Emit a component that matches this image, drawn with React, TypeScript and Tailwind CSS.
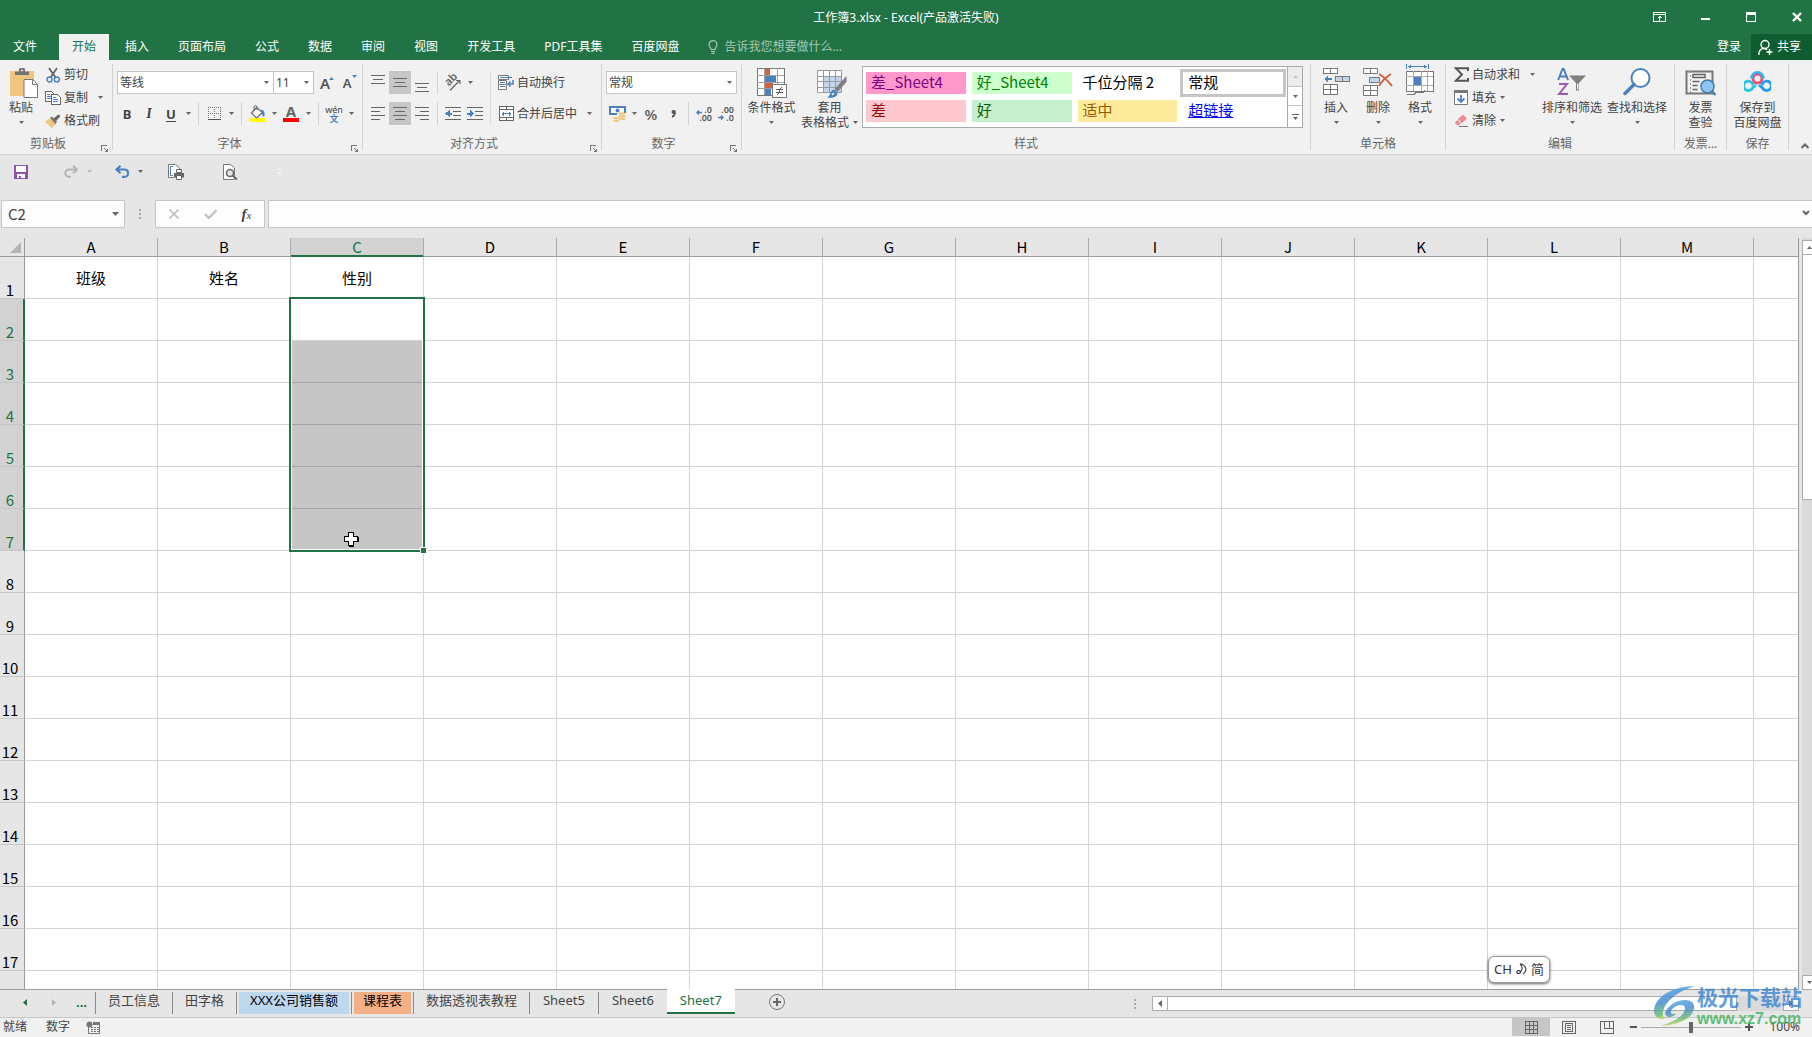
import React from 'react';
import clsx from 'clsx';

const COLUMNS = ['A', 'B', 'C', 'D', 'E', 'F', 'G', 'H', 'I', 'J', 'K', 'L', 'M'];
const ROWS = Array.from({ length: 17 }, (_, i) => i + 1);
const CELLS: Record<string, string> = { A1: '班级', B1: '姓名', C1: '性别' };
const SELECTION = { column: 'C', first: 2, last: 7 };

const MENU_TABS = ['文件', '开始', '插入', '页面布局', '公式', '数据', '审阅', '视图', '开发工具', 'PDF工具集', '百度网盘'];

const CELL_STYLES = [
  { name: '差_Sheet4', look: 'bg-[#ff99cc] text-[#800080]' },
  { name: '好_Sheet4', look: 'bg-[#ccffcc] text-[#008000]' },
  { name: '千位分隔 2', look: 'text-black' },
  { name: '常规', look: 'text-black outline-3 outline-[#c6c6c6]' },
  { name: '差', look: 'bg-[#ffc7ce] text-[#9c0006]' },
  { name: '好', look: 'bg-[#c6efce] text-[#006100]' },
  { name: '适中', look: 'bg-[#ffeb9c] text-[#9c5700]' },
  { name: '超链接', look: 'text-[#0000ff] underline' },
];

const SHEETS = [
  { name: '员工信息', look: 'px-3' },
  { name: '田字格', look: 'px-3' },
  { name: 'XXX公司销售额', look: 'mx-0.5 bg-[#bdd7ee] px-[11px] text-black' },
  { name: '课程表', look: 'mx-0.5 bg-[#f4b084] px-[9px] text-black' },
  { name: '数据透视表教程', look: 'px-3' },
  { name: 'Sheet5', look: 'px-[13px]' },
  { name: 'Sheet6', look: 'px-[13px]' },
  { name: 'Sheet7', look: 'px-[13px]', active: true },
];

/* ---------- small shared pieces ---------- */

function Svg({
  w,
  h,
  crisp,
  className,
  children,
}: {
  w: number;
  h: number;
  crisp?: boolean;
  className?: string;
  children: React.ReactNode;
}) {
  return (
    <svg
      width={w}
      height={h}
      viewBox={`0 0 ${w} ${h}`}
      fill="none"
      shapeRendering={crisp ? 'crispEdges' : 'auto'}
      className={clsx('shrink-0', className)}
      aria-hidden
    >
      {children}
    </svg>
  );
}

function Caret({ className }: { className?: string }) {
  return (
    <Svg w={5} h={3} className={className}>
      <path d="M0 0h5L2.5 3z" fill="currentColor" />
    </Svg>
  );
}

function IconButton({ label, pressed, children }: { label: string; pressed?: boolean; children: React.ReactNode }) {
  return (
    <button
      type="button"
      aria-label={label}
      title={label}
      className={clsx('flex h-[23px] w-[22px] shrink-0 items-center justify-center', pressed && 'bg-[#c6c6c6]')}
    >
      {children}
    </button>
  );
}

function CaretButton({ label }: { label: string }) {
  return (
    <button type="button" aria-label={label} className="flex h-[23px] w-3 shrink-0 items-center justify-center text-[#666]">
      <Caret />
    </button>
  );
}

function Divider() {
  return <span className="mx-1 h-[23px] w-px shrink-0 bg-[#d2d2d2]" />;
}

function Group({
  title,
  launcher,
  className,
  children,
}: {
  title: string;
  launcher?: boolean;
  className: string;
  children: React.ReactNode;
}) {
  return (
    <>
      <section aria-label={title} className={clsx('flex flex-col', className)}>
        <div className="flex h-[75px] items-start">{children}</div>
        <div className="flex h-[18px] items-center text-[#666]">
          <span className="flex-1 text-center">{title}</span>
          {launcher && (
            <button type="button" aria-label={`${title}设置`} className="flex h-4 w-4 items-end justify-center">
              <Svg w={7} h={7} crisp>
                <path d="M.5 6V.5H6" stroke="#777" />
                <path d="M3 3l3 3" stroke="#777" />
                <path d="M7 3v4H3z" fill="#777" />
              </Svg>
            </button>
          )}
        </div>
      </section>
      <span className="my-1 w-px shrink-0 bg-[#d2d2d2]" />
    </>
  );
}

function BigButton({
  icon,
  lines,
  caret,
  inlineCaret,
  className,
}: {
  icon: React.ReactNode;
  lines: string[];
  caret?: boolean;
  inlineCaret?: boolean;
  className: string;
}) {
  return (
    <button type="button" className={clsx('flex shrink-0 flex-col items-center pt-2', className)}>
      <span className="mb-0.5 flex h-[30px] items-start justify-center">{icon}</span>
      {lines.map((line, i) => (
        <span key={line} className="flex items-center gap-1 whitespace-nowrap leading-[15px]">
          {line}
          {inlineCaret && i === lines.length - 1 && <Caret className="text-[#666]" />}
        </span>
      ))}
      {caret && (
        <span className="flex h-[15px] items-center">
          <Caret className="text-[#666]" />
        </span>
      )}
    </button>
  );
}

function SmallButton({ icon, label, caret }: { icon: React.ReactNode; label: string; caret?: string }) {
  return (
    <button type="button" className="flex h-[23px] items-center whitespace-nowrap">
      <span className="mr-[3px] flex w-4 justify-center">{icon}</span>
      {label}
      {caret && <Caret className={clsx('text-[#666]', caret)} />}
    </button>
  );
}

function Combo({ label, value, className }: { label: string; value: string; className: string }) {
  return (
    <span className={clsx('relative block h-[23px] shrink-0', className)}>
      <select
        aria-label={label}
        defaultValue={value}
        className="h-full w-full appearance-none border border-[#c6c6c6] bg-white pl-0.5 text-[12px] text-[#444] outline-none"
      >
        <option>{value}</option>
      </select>
      <Caret className="pointer-events-none absolute right-[5px] top-2.5 text-[#666]" />
    </span>
  );
}

/* three or four text lines, given as [start, end] pairs */
function Lines({ rows, top }: { rows: [number, number][]; top: number }) {
  return (
    <Svg w={14} h={20} crisp>
      {rows.map(([a, b], i) => (
        <path key={i} d={`M${a} ${top + i * 4 + 0.5}H${b}`} stroke="#666" />
      ))}
    </Svg>
  );
}

/* ---------- title bar and menu ---------- */

function TitleBar() {
  return (
    <header className="bg-[#217346] text-white">
      <div className="relative flex h-[34px] items-center justify-end">
        <h1 className="absolute inset-x-0 top-0 text-center leading-9">
          <span className="inline-block">工作簿3.xlsx - Excel(产品激活失败)</span>
        </h1>
        <div className="relative flex">
          <button type="button" aria-label="功能区显示选项" className="flex h-8 w-[46px] items-center justify-center">
            <Svg w={13} h={10} crisp>
              <path d="M.5.5h12v9H.5z" stroke="#fff" />
              <path d="M0 2.500h13M6.500 4v5M4.500 5.500h4M5.500 4.500h2" stroke="#fff" />
            </Svg>
          </button>
          <button type="button" aria-label="最小化" className="flex h-8 w-[46px] items-center justify-center pt-1">
            <span className="h-0.5 w-[9px] bg-white" />
          </button>
          <button type="button" aria-label="最大化" className="flex h-8 w-[46px] items-center justify-center">
            <span className="h-[10px] w-[10px] border border-t-3 border-white" />
          </button>
          <button type="button" aria-label="关闭" className="flex h-8 w-[38px] items-center justify-center pl-2">
            <Svg w={10} h={10}>
              <path d="M1 1l8 8M9 1L1 9" stroke="#fff" strokeWidth="2.400" />
            </Svg>
          </button>
        </div>
      </div>
      <nav className="flex h-[26px] items-stretch">
        {MENU_TABS.map((tab, i) => (
          <button
            key={tab}
            type="button"
            className={clsx(
              'shrink-0 px-[13px]',
              i === 0 ? 'mr-[9px]' : 'mr-[3px]',
              tab === '开始' ? 'bg-[#f1f1f1] text-[#217346]' : 'text-white',
            )}
          >
            {tab}
          </button>
        ))}
        <label className="ml-[13px] flex flex-1 items-center gap-1.5">
          <Svg w={10} h={14}>
            <path
              d="M3 9.500C3 7.500 1 7 1 4.600a4 4 0 018 0C9 7 7 7.500 7 9.500zM3 11.500h4M3.500 13.300h3"
              stroke="#a6c7b5"
              strokeWidth="1.200"
            />
          </Svg>
          <input
            type="text"
            placeholder="告诉我您想要做什么..."
            className="w-60 bg-transparent outline-none placeholder:text-[#a6c7b5]"
          />
        </label>
        <button type="button" className="px-2.5">登录</button>
        <button type="button" className="flex items-center gap-1 bg-[#0e5c2f] pl-[7px] pr-[11px]">
          <Svg w={15} h={17}>
            <circle cx="7" cy="5.500" r="4" stroke="#fff" strokeWidth="1.400" />
            <path d="M.8 16c0-4 2-6.500 5-6.500 1.500 0 2.500.5 3.200 1.200M11.500 10v6M8.500 13h6" stroke="#fff" strokeWidth="1.400" />
          </Svg>
          共享
        </button>
      </nav>
    </header>
  );
}

/* ---------- ribbon ---------- */

function ClipboardGroup() {
  return (
    <Group title="剪贴板" launcher className="w-[112px] shrink-0">
      <BigButton
        className="mx-0.5 w-[38px]"
        lines={['粘贴']}
        caret
        icon={
          <Svg w={29} h={30} className="ml-1">
            <path d="M1 3h24v25H1z" fill="#eec67f" />
            <path d="M6 7V3.500h4V1.500a3 2 0 016 0v2h4V7z" fill="#737373" />
            <circle cx="13" cy="2.500" r="1" fill="#f1f1f1" />
            <path d="M15 11.500h9l4.500 5V29.500H15z" fill="#fff" stroke="#777" />
            <path d="M23.500 11.500v5h5" stroke="#777" />
          </Svg>
        }
      />
      <div className="flex flex-col pl-[3px] pt-[3px]">
        <SmallButton
          label="剪切"
          icon={
            <Svg w={14} h={16}>
              <path d="M3 1l6.500 9.500M11 1L4.500 10.500" stroke="#666" strokeWidth="1.800" />
              <circle cx="3.500" cy="12.500" r="2.500" stroke="#4a80bd" strokeWidth="1.400" />
              <circle cx="10.800" cy="12.500" r="2.500" stroke="#4a80bd" strokeWidth="1.400" />
            </Svg>
          }
        />
        <SmallButton
          label="复制"
          caret="ml-2.5"
          icon={
            <Svg w={16} h={14} crisp>
              <path d="M.5.5h6l2 2v8h-8z" fill="#fff" stroke="#666" />
              <path d="M2 3.500h3M2 5.500h4M2 7.500h4" stroke="#4a80bd" />
              <path d="M6.500 3.500h6l2.500 2.500v7.500H6.500z" fill="#fff" stroke="#666" />
              <path d="M8 6.500h3M8 8.500h5M8 10.500h5" stroke="#4a80bd" />
            </Svg>
          }
        />
        <SmallButton
          label="格式刷"
          icon={
            <Svg w={16} h={14}>
              <path d="M0 8l5-4 6 6-4 4-2-1-1-2-2-1z" fill="#eec67f" />
              <path d="M5 4l2-1.500 5 5L10.500 10z" fill="#777" />
              <path d="M8.500 4.500L13 .8a1.500 1.500 0 012 2L11 7z" fill="#666" />
            </Svg>
          }
        />
      </div>
    </Group>
  );
}

function FontGroup() {
  return (
    <Group title="字体" launcher className="w-[249px] shrink-0">
      <div className="flex flex-col gap-2 pl-[3px] pt-[11px]">
        <div className="flex items-center pl-px">
          <Combo label="字体" value="等线" className="w-[157px]" />
          <Combo label="字号" value="11" className="-ml-px w-[41px]" />
          <IconButton label="增大字号">
            <span className="relative text-[15px] font-semibold text-[#555]">
              A
              <Caret className="absolute -right-1 top-0.5 rotate-180 text-[#4a80bd]" />
            </span>
          </IconButton>
          <IconButton label="减小字号">
            <span className="relative text-[13px] font-semibold text-[#555]">
              A
              <Caret className="absolute -right-1.5 top-0 text-[#4a80bd]" />
            </span>
          </IconButton>
        </div>
        <div className="flex items-center">
          <IconButton label="加粗"><b className="text-[13px] text-[#444]">B</b></IconButton>
          <IconButton label="倾斜"><i className="font-serif text-[14px] font-bold text-[#444]">I</i></IconButton>
          <IconButton label="下划线"><span className="text-[13px] font-bold text-[#444] underline underline-offset-2">U</span></IconButton>
          <CaretButton label="下划线样式" />
          <Divider />
          <IconButton label="边框">
            <Svg w={13} h={13} crisp>
              <path d="M.5 0v12M6.500 0v12M12.500 0v12M0 .5h13M0 6.500h13" stroke="#777" strokeDasharray="1 1" />
              <path d="M0 12.500h13" stroke="#555" />
            </Svg>
          </IconButton>
          <CaretButton label="边框样式" />
          <Divider />
          <IconButton label="填充颜色">
            <Svg w={16} h={17}>
              <path d="M7.500 2.500l6 5-6 5.500-5-5z" fill="#fff" stroke="#666" strokeWidth="1.200" />
              <path d="M5 6V1.500C5 .5 8 .5 8 1.500V5" stroke="#666" />
              <path d="M12 4.500c3 .5 4 3 3.500 6-.5 1.500-2 1-2 0z" fill="#4a80bd" />
              <path d="M0 13h16v4H0z" fill="#ff0" />
            </Svg>
          </IconButton>
          <CaretButton label="填充颜色列表" />
          <IconButton label="字体颜色">
            <span className="flex w-4 flex-col items-center text-[15px] font-bold leading-[13px] text-[#666]">
              A
              <span className="h-1 w-4 bg-[#f00]" />
            </span>
          </IconButton>
          <CaretButton label="字体颜色列表" />
          <Divider />
          <IconButton label="拼音">
            <span className="flex flex-col items-center text-[9px] leading-[9px] text-[#444]">
              wén
              <span className="font-bold text-[#4a80bd]">文</span>
            </span>
          </IconButton>
          <CaretButton label="拼音选项" />
        </div>
      </div>
    </Group>
  );
}

function Indent({ flip }: { flip?: boolean }) {
  return (
    <Svg w={16} h={13} crisp>
      <path d="M0 .5h16M8 4.500h8M8 8.500h8M0 12.500h16" stroke="#666" />
      <path d={flip ? 'M0 6.500h5' : 'M2 6.500h5'} stroke="#4a80bd" strokeWidth="2" />
      <path d={flip ? 'M3 3l4.500 3.500L3 10z' : 'M4.500 3L0 6.500 4.500 10z'} fill="#4a80bd" />
    </Svg>
  );
}

function AlignGroup() {
  return (
    <Group title="对齐方式" launcher className="w-[238px] shrink-0">
      <div className="flex pl-1 pt-[11px]">
        <div className="flex w-[120px] flex-col gap-2">
          <div className="flex">
            <IconButton label="顶端对齐"><Lines top={2} rows={[[0, 14], [2, 12], [0, 14]]} /></IconButton>
            <IconButton label="垂直居中" pressed><Lines top={5} rows={[[0, 14], [2, 12], [0, 14]]} /></IconButton>
            <IconButton label="底端对齐"><Lines top={10} rows={[[0, 14], [2, 12], [0, 14]]} /></IconButton>
            <Divider />
            <IconButton label="方向">
              <span className="relative h-4 w-4">
                <span className="absolute -left-px -top-0.5 -rotate-45 text-[11px] font-semibold leading-3 text-[#666]">ab</span>
                <Svg w={16} h={16} className="absolute inset-0">
                  <path d="M5 15.500L14.500 5.500M11 5.500h4V9" stroke="#666" strokeWidth="1.200" />
                </Svg>
              </span>
            </IconButton>
            <CaretButton label="方向选项" />
          </div>
          <div className="flex">
            <IconButton label="左对齐"><Lines top={3} rows={[[0, 14], [0, 9], [0, 14], [0, 9]]} /></IconButton>
            <IconButton label="居中" pressed><Lines top={3} rows={[[0, 14], [2, 12], [0, 14], [2, 12]]} /></IconButton>
            <IconButton label="右对齐"><Lines top={3} rows={[[0, 14], [5, 14], [0, 14], [5, 14]]} /></IconButton>
            <Divider />
            <IconButton label="减少缩进量"><Indent /></IconButton>
            <IconButton label="增加缩进量"><Indent flip /></IconButton>
          </div>
        </div>
        <span className="mx-[3px] w-px bg-[#dcdcdc]" />
        <div className="flex flex-col gap-2 pl-1">
          <SmallButton
            label="自动换行"
            icon={
              <Svg w={16} h={16}>
                <path d="M.5.5h10v4H.5zM.5 5.500h8v4h-8zM.5 9.500h8v5h-8z" fill="#fff" stroke="#777" />
                <path d="M2 2.500h12M2 7.500h5M2 11.500h5" stroke="#4a80bd" />
                <path d="M15 5v4h-4M12.500 6.500L10 9l2.500 2.500" stroke="#4a80bd" strokeWidth="1.500" />
              </Svg>
            }
          />
          <SmallButton
            label="合并后居中"
            caret="ml-2.5"
            icon={
              <Svg w={15} h={15} crisp>
                <path d="M.5.5h14v14H.5zM.5 3.500h14M.5 11.500h14M7.500 0v3M7.500 12v3" fill="#fff" stroke="#666" />
                <path d="M3 7.500h9M4.500 5.500v4M3.500 6.500v2M10.500 5.500v4M11.500 6.500v2" stroke="#4a80bd" />
              </Svg>
            }
          />
        </div>
      </div>
    </Group>
  );
}

function DecimalIcon({ more }: { more?: boolean }) {
  return (
    <span className="relative flex h-4 w-4 flex-col text-right text-[9px] font-semibold leading-2 text-[#555]">
      <span>{more ? '.0' : '.00'}</span>
      <span>{more ? '.00' : '.0'}</span>
      <Svg w={6} h={5} className={clsx('absolute', more ? 'left-0 top-1' : 'bottom-0.5 left-0')}>
        <path d={more ? 'M6 2.500H1.500M3 .5l-2 2 2 2' : 'M0 2.500h4.500M3 .5l2 2-2 2'} stroke="#4a80bd" strokeWidth="1.500" />
      </Svg>
    </span>
  );
}

function NumberGroup() {
  return (
    <Group title="数字" launcher className="w-[139px] shrink-0">
      <div className="flex flex-col gap-2 pl-1 pt-[11px]">
        <Combo label="数字格式" value="常规" className="w-[131px]" />
        <div className="flex items-center">
          <IconButton label="会计数字格式">
            <Svg w={17} h={16}>
              <path d="M1 1h15v7H1z" fill="#fff" stroke="#4a80bd" strokeWidth="2" />
              <circle cx="8.500" cy="4.500" r="2" fill="#4a80bd" />
              <path d="M8 7h9v7H8z" fill="#f1f1f1" />
              <ellipse cx="13" cy="7.500" rx="3.500" ry="1.200" fill="#eec67f" />
              <ellipse cx="13" cy="10.200" rx="3.500" ry="1.200" fill="#eec67f" />
              <ellipse cx="13" cy="12.900" rx="3.500" ry="1.200" fill="#eec67f" />
              <ellipse cx="7" cy="12.200" rx="3.200" ry="1.100" fill="#eec67f" />
              <ellipse cx="7.500" cy="14.800" rx="3.200" ry="1.100" fill="#eec67f" />
            </Svg>
          </IconButton>
          <CaretButton label="会计格式列表" />
          <IconButton label="百分比样式"><span className="text-[15px] font-medium text-[#555]">%</span></IconButton>
          <IconButton label="千位分隔样式">
            <Svg w={5} h={8}>
              <path d="M1 5.500C3 5 3 4 2.500 4A2 2 0 112.500 0 2.200 2.200 0 014.800 2.500C4.800 5 3.500 7.500 1 7.500z" fill="#555" />
            </Svg>
          </IconButton>
          <Divider />
          <IconButton label="增加小数位数"><DecimalIcon more /></IconButton>
          <IconButton label="减少小数位数"><DecimalIcon /></IconButton>
        </div>
      </div>
    </Group>
  );
}

function StylesGroup() {
  return (
    <Group title="样式" className="w-[568px] min-w-0">
      <BigButton
        className="ml-px w-[57px]"
        lines={['条件格式']}
        caret
        icon={
          <Svg w={30} h={30} crisp>
            <path d="M.5.5h27v27H.5z" fill="#fff" stroke="#777" />
            <path d="M8 1h5v6H8z" fill="#d6603d" />
            <path d="M8 8h11v6H8z" fill="#4a80bd" />
            <path d="M8 14h8v6H8z" fill="#d6603d" />
            <path d="M8 21h6v6H8z" fill="#4a80bd" />
            <path d="M7.500 0v27M20.500 0v27M0 7.500h27M0 14.500h27M0 20.500h27" stroke="#a0a0a0" />
            <path d="M15.500 16.500h14v13h-14z" fill="#fff" stroke="#777" />
            <path d="M19 21.500h7M19 24.500h7M24.500 19l-4 8" stroke="#555" />
          </Svg>
        }
      />
      <BigButton
        className="w-[59px]"
        lines={['套用', '表格格式']}
        inlineCaret
        icon={
          <Svg w={30} h={30} className="ml-1">
            <path d="M.5 2.500h24v22H.5z" fill="#fff" />
            <path d="M6.500 8.500h18v16h-18z" fill="#c3d5eb" />
            <path d="M.5 2.500h24v22H.5zM6.500 2v22M12.500 2v22M18.500 2v22M0 8.500h24M0 13.500h24M0 19.500h24" stroke="#999" />
            <path d="M29.500 8v6L20.500 24l-3-3z" fill="#808080" />
            <path d="M17 21.500l3.500 3.500c0 3.500-4 5.500-10.500 4.500 3-.5 3-7 7-8z" fill="#4a80bd" />
            <path d="M15 27l2-2" stroke="#fff" strokeWidth="1.500" />
          </Svg>
        }
      />
      <div className="ml-[3px] mr-[7px] mt-1.5 flex h-[62px] flex-1 border border-[#ababab] bg-white">
        <div className="grid flex-1 grid-cols-4 gap-x-1.5 gap-y-1.5 px-[3px] py-[5px] font-['Noto_Sans_CJK_SC',sans-serif] text-[15px]">
          {CELL_STYLES.map((s) => (
            <button
              key={s.name}
              type="button"
              className={clsx('h-[22px] whitespace-nowrap pb-0.5 pl-[5px] text-left leading-5', s.look)}
            >
              {s.name}
            </button>
          ))}
        </div>
        <div className="ml-px flex w-[15px] flex-col border-l border-[#ababab] text-[#666]">
          <button type="button" aria-label="上一行" className="flex h-5 items-center justify-center border-b border-[#c6c6c6] bg-[#ececec]">
            <Caret className="rotate-180 text-[#c6c6c6]" />
          </button>
          <button type="button" aria-label="下一行" className="flex h-[19px] items-center justify-center border-b border-[#c6c6c6]">
            <Caret />
          </button>
          <button type="button" aria-label="其他样式" className="flex flex-1 flex-col items-center justify-center gap-0.5">
            <span className="h-px w-[7px] bg-[#666]" />
            <Caret />
          </button>
        </div>
      </div>
    </Group>
  );
}

function CellsGroup() {
  return (
    <Group title="单元格" className="w-[134px] shrink-0">
      <BigButton
        className="ml-1 w-[42px]"
        lines={['插入']}
        caret
        icon={
          <Svg w={27} h={28} crisp>
            <path d="M.5.5h14v5H.5zM7.500 0v5M.5 16.500h14v10H.5zM7.500 16v11M0 21.500h14" fill="#fff" stroke="#777" />
            <path d="M12.500 8.500h14v5h-14zM19.500 8v5" fill="#c3d5eb" stroke="#777" />
            <path d="M3 11h6" stroke="#4a80bd" strokeWidth="2" />
            <path d="M5 7.500v7L1 11z" fill="#4a80bd" />
          </Svg>
        }
      />
      <BigButton
        className="w-[42px]"
        lines={['删除']}
        caret
        icon={
          <Svg w={30} h={28}>
            <path d="M.5.500h14v5H.5zM7.500 0v5M.5 17.500h14v10H.5zM7.500 17v11M0 22.500h14" fill="#fff" stroke="#777" />
            <path d="M6.500 9.500h10v5h-10z" fill="#c3d5eb" stroke="#777" />
            <path d="M16 6c5 3 9 7 13 12M28 6c-5 3-9 7-12 12" stroke="#d6603d" strokeWidth="2" />
          </Svg>
        }
      />
      <BigButton
        className="w-[42px]"
        lines={['格式']}
        caret
        icon={
          <Svg w={28} h={31} crisp className="-mt-1">
            <path d="M.5 0v5M22.500 0v5M2 2.500h19M4.500 1v3M3.500 1.500v2M18.500 1v3M19.500 1.500v2" stroke="#4a80bd" />
            <path d="M.5 7.500h27v20H.5z" fill="#fff" stroke="#777" />
            <path d="M7.500 7v20M15.500 7v20M21.500 7v20M0 12.500h27M0 21.500h27" stroke="#aaa" />
            <path d="M8 13h7v8H8z" fill="#4a80bd" />
            <path d="M1 30.500h7l2-2h7l2-2" stroke="#777" />
          </Svg>
        }
      />
    </Group>
  );
}

function EditGroup() {
  return (
    <Group title="编辑" className="w-[228px] shrink-0">
      <div className="flex w-[93px] shrink-0 flex-col pl-[7px] pt-[3px]">
        <SmallButton
          label="自动求和"
          caret="ml-2.5"
          icon={
            <Svg w={15} h={15}>
              <path d="M14 4V1.200H1.800L8 7.500l-6.200 6.300H14V11" stroke="#555" strokeWidth="2" />
            </Svg>
          }
        />
        <SmallButton
          label="填充"
          caret="ml-1"
          icon={
            <Svg w={14} h={15}>
              <path d="M.5.5h13v14H.5z" fill="#fff" stroke="#777" />
              <path d="M0 1.500h14" stroke="#777" strokeWidth="3" />
              <path d="M7 5v7M3.500 8.500L7 12l3.500-3.500" stroke="#4a80bd" strokeWidth="1.800" />
            </Svg>
          }
        />
        <SmallButton
          label="清除"
          caret="ml-1"
          icon={
            <Svg w={14} h={14}>
              <path d="M4 5l5-4.500 4 4L7.500 9.500z" fill="#e98c98" />
              <path d="M3.500 5.500l3.500 4-2 2H3L.5 9z" fill="#e98c98" stroke="#f1f1f1" strokeWidth=".6" />
              <path d="M5 12.500h9" stroke="#777" />
            </Svg>
          }
        />
      </div>
      <BigButton
        className="w-[66px]"
        lines={['排序和筛选']}
        caret
        icon={
          <Svg w={30} h={28}>
            <path d="M1.200 12L5.500 1h1.200L11 12M2.800 8.500h6.600" stroke="#4a80bd" strokeWidth="2" />
            <path d="M2 16h8L2 26h9" stroke="#9b59b6" strokeWidth="2" />
            <path d="M12 7.500h17l-7 7.500v7.500h-3V15z" fill="#808080" />
            <path d="M20 15.500h1.500v6H20z" fill="#f1f1f1" />
          </Svg>
        }
      />
      <BigButton
        className="w-[64px]"
        lines={['查找和选择']}
        caret
        icon={
          <Svg w={28} h={28}>
            <circle cx="17.500" cy="10" r="9" fill="#fff" stroke="#4a80bd" strokeWidth="2" />
            <path d="M11 16.500L2 25.500" stroke="#4a80bd" strokeWidth="3.500" strokeLinecap="round" />
          </Svg>
        }
      />
    </Group>
  );
}

function Ribbon() {
  return (
    <div className="flex h-[95px] shrink-0 overflow-hidden border-b border-[#d2d2d2] bg-[#f1f1f1] text-[#444]">
      <ClipboardGroup />
      <FontGroup />
      <AlignGroup />
      <NumberGroup />
      <StylesGroup />
      <CellsGroup />
      <EditGroup />
      <Group title="发票..." className="w-[51px] shrink-0">
        <BigButton
          className="w-full"
          lines={['发票', '查验']}
          icon={
            <Svg w={31} h={28}>
              <path d="M1.500 3.500h26v22h-26z" stroke="#777" strokeWidth="2" />
              <path d="M5.500 3v23M4 3v3M4 24v3" stroke="#999" strokeDasharray="2 2" />
              <path d="M8 6.500h12v3H8z" stroke="#666" strokeWidth="1.500" />
              <path d="M7.500 13.500h7M7.500 17.500h5M7.500 21.500h5" stroke="#666" strokeWidth="1.500" />
              <circle cx="22.500" cy="18.500" r="6.500" fill="#90c4f4" stroke="#3f7fa8" strokeWidth="1.500" />
              <path d="M27 23l3.500 4" stroke="#3f7fa8" strokeWidth="2" />
            </Svg>
          }
        />
      </Group>
      <Group title="保存" className="w-[61px] shrink-0">
        <BigButton
          className="w-full"
          lines={['保存到', '百度网盘']}
          icon={
            <Svg w={27} h={26}>
              <path d="M11 13.500l-2.500 2.200a4.700 4.700 0 100 4.300l3.500-3" stroke="#25c3ee" strokeWidth="2.800" />
              <path d="M16 13.500l2.500 2.200a4.700 4.700 0 110 4.300l-3.500-3" stroke="#1f9bf5" strokeWidth="2.800" />
              <circle cx="13.500" cy="10.500" r="4.500" stroke="#f0506e" strokeWidth="2.800" />
              <path d="M7.500 10.500a6 6.200 0 0112 0" stroke="#2bb8f5" strokeWidth="2.600" />
            </Svg>
          }
        />
      </Group>
      <button type="button" aria-label="折叠功能区" className="ml-auto flex w-[11px] shrink-0 items-end pb-[5px]">
        <Svg w={8} h={6}>
          <path d="M.5 5L4 1.500 7.500 5" stroke="#666" strokeWidth="2" />
        </Svg>
      </button>
    </div>
  );
}

/* ---------- quick access and formula bar ---------- */

function QuickAccess() {
  return (
    <div className="flex h-[35px] shrink-0 items-center pb-0.5 pl-3.5">
      <button type="button" aria-label="保存">
        <Svg w={14} h={14} crisp>
          <path d="M0 0h14v14H0z" fill="#8a57ad" />
          <path d="M2 1h10v6H2zM3 9h8v4H3z" fill="#fff" />
          <path d="M5 11h2v2H5z" fill="#8a57ad" />
        </Svg>
      </button>
      <button type="button" aria-label="恢复" className="ml-9 flex items-center gap-[9px] text-[#bdbdbd]">
        <Svg w={14} h={13}>
          <path d="M13 4.500H5A3.500 3.500 0 005 11.800h2M9 .8l4 3.700-4 3.700" stroke="#b5b5b5" strokeWidth="2" />
        </Svg>
        <Caret />
      </button>
      <button type="button" aria-label="撤消" className="ml-[23px] flex items-center gap-[9px] text-[#666]">
        <Svg w={14} h={13}>
          <path d="M1.500 4.500h8a3.600 3.600 0 010 7.300H7M5.500.8l-4 3.700 4 3.700" stroke="#4a80bd" strokeWidth="2.200" />
        </Svg>
        <Caret />
      </button>
      <button type="button" aria-label="快速打印" className="ml-[25px]">
        <Svg w={17} h={16}>
          <path d="M6 13.500H.5V.5h7l4 3.500v2" fill="#fff" stroke="#777" />
          <path d="M5 2.500H2.500v9H5" stroke="#4a80bd" />
          <path d="M6 9h10v4.500H6z" fill="#666" />
          <path d="M8.500 5.500h5v3h-5zM8.500 11.500h5v4h-5z" fill="#fff" stroke="#666" />
        </Svg>
      </button>
      <button type="button" aria-label="打印预览" className="ml-[38px]">
        <Svg w={15} h={16}>
          <path d="M.5.5h7l4 3.500v11.500H.5z" fill="#fff" stroke="#777" />
          <circle cx="7" cy="9" r="3.500" fill="#e6e6e6" stroke="#666" strokeWidth="1.500" />
          <path d="M9.500 11.500l4.500 4" stroke="#666" strokeWidth="2" />
        </Svg>
      </button>
      <button type="button" aria-label="自定义快速访问工具栏" className="ml-[38px] flex flex-col items-center gap-0.5 text-[#f4f4f4]">
        <span className="h-px w-1.5 bg-[#f4f4f4]" />
        <Caret />
      </button>
    </div>
  );
}

function Dots() {
  return (
    <span className="flex flex-col gap-0.5">
      <span className="h-0.5 w-0.5 bg-[#ababab]" />
      <span className="h-0.5 w-0.5 bg-[#ababab]" />
      <span className="h-0.5 w-0.5 bg-[#ababab]" />
    </span>
  );
}

function FormulaBar() {
  return (
    <div className="flex h-12 shrink-0 items-start pl-px pt-2.5">
      <label className="relative flex h-7 w-[124px] items-center border border-[#c6c6c6] bg-[#fdfdfd]">
        <input
          type="text"
          aria-label="名称框"
          defaultValue="C2"
          className="w-full bg-transparent pl-1.5 font-['Noto_Sans_CJK_SC',sans-serif] text-[15px] text-[#444] outline-none"
        />
        <Svg w={7} h={4} className="absolute right-[5px]">
          <path d="M0 0h7L3.500 4z" fill="#666" />
        </Svg>
      </label>
      <span className="flex h-7 w-[30px] items-center justify-center"><Dots /></span>
      <div className="flex h-7 w-[110px] items-center justify-around border border-[#c6c6c6] bg-[#fdfdfd]">
        <button type="button" aria-label="取消">
          <Svg w={10} h={10}><path d="M.5.5l9 9M9.500.5l-9 9" stroke="#c3c3c3" strokeWidth="1.800" /></Svg>
        </button>
        <button type="button" aria-label="输入">
          <Svg w={13} h={10}><path d="M1 5l3.800 4L12.500 1" stroke="#c3c3c3" strokeWidth="2.400" /></Svg>
        </button>
        <button type="button" aria-label="插入函数" className="font-['Liberation_Serif'] text-[15px] italic leading-4 text-[#444]">
          <b>f</b><span className="text-[11px]">x</span>
        </button>
      </div>
      <div className="relative ml-[3px] h-7 flex-1">
        <input
          type="text"
          aria-label="编辑栏"
          className="h-full w-full border border-r-0 border-[#c6c6c6] bg-[#fdfdfd] px-1.5 text-[15px] outline-none"
        />
        <button type="button" aria-label="展开编辑栏" className="absolute right-0.5 top-2.5">
          <Svg w={8} h={6}><path d="M1 1l3 3 3-3" stroke="#666" strokeWidth="2" /></Svg>
        </button>
      </div>
    </div>
  );
}

/* ---------- worksheet ---------- */

function Grid() {
  return (
    <table className="w-full table-fixed border-separate border-spacing-0 text-center font-['Noto_Sans_CJK_SC',sans-serif] text-[15px] leading-4 text-black">
      <colgroup>
        <col className="w-[25px]" />
        {COLUMNS.map((c) => (
          <col key={c} className="w-[133px]" />
        ))}
        <col />
      </colgroup>
      <thead>
        <tr className="h-[19px] bg-[#e6e6e6]">
          <th className="border-b border-r border-[#9b9b9b] p-0">
            <Svg w={11} h={11} className="ml-2.5">
              <path d="M11 0v11H0z" fill="#b4b4b4" />
            </Svg>
          </th>
          {COLUMNS.map((c) => (
            <th
              key={c}
              scope="col"
              className={clsx(
                'border-b border-r border-r-[#ababab] p-0 font-normal',
                c === SELECTION.column
                  ? 'border-b-[#217346] bg-[#d2d2d2] text-[#217346] inset-shadow-[0_-1px_0_#217346]'
                  : 'border-b-[#9b9b9b]',
              )}
            >
              {c}
            </th>
          ))}
          <th className="border-b border-[#9b9b9b] p-0" />
        </tr>
      </thead>
      <tbody>
        {ROWS.map((r) => {
          const rowSelected = r >= SELECTION.first && r <= SELECTION.last;
          return (
            <tr key={r} className="h-[42px]">
              <th
                scope="row"
                className={clsx(
                  'border-b border-b-[#c6c6c6] p-0 align-bottom font-normal',
                  rowSelected
                    ? 'border-r-2 border-r-[#217346] bg-[#d2d2d2] pr-[3px] text-[#217346]'
                    : 'border-r border-r-[#9b9b9b] bg-[#e6e6e6] pr-1',
                )}
              >
                {r}
              </th>
              {COLUMNS.map((c) => {
                const selected = rowSelected && c === SELECTION.column;
                const anchor = selected && r === SELECTION.first;
                return (
                  <td
                    key={c}
                    className={clsx(
                      'border-b border-r p-0',
                      selected && !anchor ? 'border-[#a6a6a6] bg-[#c6c6c6]' : 'border-[#d4d4d4]',
                      anchor && 'relative z-10',
                    )}
                  >
                    {CELLS[`${c}${r}`]}
                    {anchor && (
                      <div className="absolute -left-0.5 -top-0.5 h-[255px] w-[136px] border-2 border-[#217346] inset-shadow-[0_0_0_1px_#fff]">
                        <span className="absolute -bottom-1 -right-1 h-[7px] w-[7px] border border-white bg-[#217346]" />
                        <Svg w={15} h={15} crisp className="absolute bottom-[3px] left-[53px]">
                          <path d="M5 1h5v4h5v5h-5v5H5v-5H1V5h4z" fill="#000" />
                          <path d="M4.500.5h5v4h4v5h-4v4h-5v-4h-4v-5h4z" fill="#fff" stroke="#000" />
                        </Svg>
                      </div>
                    )}
                  </td>
                );
              })}
              <td className="border-b border-[#d4d4d4] p-0" />
            </tr>
          );
        })}
        {/* last row is only partly in view, its number sits below the fold */}
        <tr className="h-[42px]">
          <th scope="row" className="border-r border-[#9b9b9b] bg-[#e6e6e6]" />
          {COLUMNS.map((c) => (
            <td key={c} className="border-r border-[#d4d4d4]" />
          ))}
          <td />
        </tr>
      </tbody>
    </table>
  );
}

function VerticalScroll() {
  return (
    <div className="ml-[3px] flex w-2.5 shrink-0 flex-col overflow-hidden bg-[#dadada]">
      <button type="button" aria-label="向上滚动" className="mt-0.5 flex h-[15px] w-[17px] shrink-0 items-center border border-[#ababab] bg-white pl-1">
        <Caret className="rotate-180 text-[#666]" />
      </button>
      <div className="-mt-px h-[246px] w-[17px] shrink-0 border border-[#ababab] bg-white" />
      <button type="button" aria-label="向下滚动" className="mt-auto flex h-[15px] w-[17px] shrink-0 items-center border border-[#ababab] bg-white pl-1">
        <Caret className="text-[#666]" />
      </button>
    </div>
  );
}

function SheetBar() {
  return (
    <div className="flex h-[27px] shrink-0 items-start text-[13px] text-[#444]">
      <div className="flex h-6 w-[95px] items-center text-[#217346]">
        <button type="button" aria-label="上一张工作表" className="ml-[23px]">
          <Svg w={4} h={7}><path d="M4 0v7L0 3.500z" fill="#217346" /></Svg>
        </button>
        <button type="button" aria-label="下一张工作表" className="ml-[25px]">
          <Svg w={4} h={7}><path d="M0 0v7l4-3.500z" fill="#b5b5b5" /></Svg>
        </button>
        <button type="button" aria-label="更多工作表" className="ml-5 font-bold leading-6">...</button>
      </div>
      {SHEETS.map((s) =>
        s.active ? (
          <button
            key={s.name}
            type="button"
            className={clsx('-mt-px h-[25px] border-b-2 border-[#217346] bg-white pb-0.5 text-[#217346]', s.look)}
          >
            {s.name}
          </button>
        ) : (
          <span key={s.name} className="mt-0.5 flex h-[22px] border-l border-[#8a8a8a]">
            <button type="button" className={clsx('pb-1.5', s.look)}>
              {s.name}
            </button>
          </span>
        ),
      )}
      <button type="button" aria-label="新工作表" className="ml-[34px] mt-1">
        <Svg w={16} h={16}>
          <circle cx="8" cy="8" r="7.500" stroke="#777" />
          <path d="M8 4v8M4 8h8" stroke="#666" strokeWidth="2" />
        </Svg>
      </button>
      <div className="ml-auto mr-[13px] mt-1.5 flex h-[15px] items-center">
        <Dots />
        <div className="ml-4 flex h-full w-[647px] bg-[#dadada]">
          <button type="button" aria-label="向左滚动" className="flex w-4 items-center justify-center border border-[#ababab] bg-white">
            <Svg w={4} h={7}><path d="M4 0v7L0 3.500z" fill="#666" /></Svg>
          </button>
          <div className="-ml-px w-[570px] border border-[#ababab] bg-white" />
          <button type="button" aria-label="向右滚动" className="ml-auto flex w-4 items-center justify-center border border-[#ababab] bg-white">
            <Svg w={4} h={7}><path d="M0 0v7l4-3.500z" fill="#666" /></Svg>
          </button>
        </div>
      </div>
    </div>
  );
}

function StatusBar() {
  return (
    <footer className="flex h-5 shrink-0 items-center border-t border-[#c6c6c6] bg-[#f1f1f1] pb-px pl-[3px] pr-3 text-[#444]">
      <span>就绪</span>
      <span className="ml-[19px]">数字</span>
      <Svg w={14} h={13} className="ml-4">
        <path d="M2.500 6v6.500h11V3.500H8" stroke="#777" />
        <path d="M7 1h7v3H7z" fill="#777" />
        <circle cx="3.500" cy="3.500" r="3" fill="#777" />
        <path d="M5 6.500h8M5 8.500h8M5 10.500h8" stroke="#777" strokeDasharray="2 1" />
      </Svg>
      <div className="ml-auto flex h-full items-center">
        <button type="button" aria-label="普通" className="flex h-full w-[38px] items-center justify-center bg-[#c6c6c6]">
          <Svg w={13} h={13} crisp>
            <path d="M.5.5h12v12H.5zM4.500 0v13M8.500 0v13M0 4.500h13M0 8.500h13" stroke="#666" />
          </Svg>
        </button>
        <button type="button" aria-label="页面布局视图" className="flex h-full w-[38px] items-center justify-center">
          <Svg w={14} h={13} crisp>
            <path d="M.5.5h13v12H.5zM3.500 2.500h7v8h-7z" stroke="#666" />
            <path d="M5 4.500h4M5 6.500h4M5 8.500h4" stroke="#666" />
          </Svg>
        </button>
        <button type="button" aria-label="分页预览" className="flex h-full w-[38px] items-center justify-center">
          <Svg w={14} h={13} crisp>
            <path d="M.5 0v12.500h13V.5h-13M4.500 0v7.500h5V0M9.500 7.500h4" stroke="#666" />
          </Svg>
        </button>
        <button type="button" aria-label="缩小" className="ml-1 flex h-full w-[7px] items-center">
          <span className="h-0.5 w-[7px] bg-[#555]" />
        </button>
        <input
          type="range"
          aria-label="显示比例"
          min={0}
          max={100}
          defaultValue={50}
          className="mx-1 h-3 w-[100px] appearance-none bg-transparent bg-[linear-gradient(#aaa,#aaa)] bg-[length:100%_1px] bg-center bg-no-repeat [&::-webkit-slider-thumb]:h-[11px] [&::-webkit-slider-thumb]:w-1 [&::-webkit-slider-thumb]:appearance-none [&::-webkit-slider-thumb]:bg-[#666]"
        />
        <button type="button" aria-label="放大">
          <Svg w={8} h={8} crisp><path d="M4 0v8M0 4h8" stroke="#555" strokeWidth="2" /></Svg>
        </button>
        <span className="ml-4">100%</span>
      </div>
    </footer>
  );
}

/* ---------- floating pieces ---------- */

function ImeBadge() {
  return (
    <div className="absolute bottom-[54px] right-[262px] z-20 flex h-[27px] w-[62px] items-center justify-center gap-1 rounded-md border border-[#999] bg-white pb-0.5 text-[13px] text-[#333] shadow-[0_1px_3px_rgba(0,0,0,0.6)]">
      CH
      <Svg w={11} h={12}>
        <path d="M4 .8c6 1 8 7 3 10.200M4 .8c3 3 2.500 6 .5 8M1 8.500c1-1.500 3.500-1 3.500.5S2 11 1 10z" stroke="#333" strokeWidth="1.100" />
      </Svg>
      简
    </div>
  );
}

function SiteMark() {
  return (
    <div className="pointer-events-none absolute bottom-2 right-2.5 z-20 flex items-center opacity-80">
      <Svg w={44} h={42}>
        <defs>
          <linearGradient id="mark" x1="0" y1="0" x2="0.3" y2="1">
            <stop offset="0" stopColor="#5cb4ec" />
            <stop offset="0.5" stopColor="#3a85d2" />
            <stop offset="0.85" stopColor="#6cc06a" />
            <stop offset="1" stopColor="#e3d64e" />
          </linearGradient>
        </defs>
        <path d="M42 0C20 0 1 11 1 25c0 5 4 9 11 8C6 28 12 9 42 0z" fill="url(#mark)" />
        <path
          d="M12 27c4-9 12-13 20-13 7 0 10 4 9 9-2 9-14 16-34 17 14-4 24-10 25-17 1-6-10-5-14 2-1 3 2 4 5 2-2 5-10 6-11 0z"
          fill="url(#mark)"
        />
      </Svg>
      <div className="flex flex-col gap-0.5 pb-0.5">
        <span className="text-[21px] font-bold leading-6 text-[#3a85d2]">极光下载站</span>
        <span className="font-['Liberation_Sans'] text-[16px] font-bold leading-4 text-[#3db55b]">www.xz7.com</span>
      </div>
    </div>
  );
}

export default function App() {
  return (
    <div className="relative flex h-screen flex-col overflow-hidden bg-[#e6e6e6] font-['Noto_Sans','Noto_Sans_CJK_SC',sans-serif] text-[12px] leading-4">
      <TitleBar />
      <Ribbon />
      <QuickAccess />
      <FormulaBar />
      <main className="flex min-h-0 flex-1">
        <div className="min-w-0 flex-1 overflow-hidden border-b border-r border-[#9b9b9b] bg-white">
          <Grid />
        </div>
        <VerticalScroll />
      </main>
      <SheetBar />
      <StatusBar />
      <ImeBadge />
      <SiteMark />
    </div>
  );
}
